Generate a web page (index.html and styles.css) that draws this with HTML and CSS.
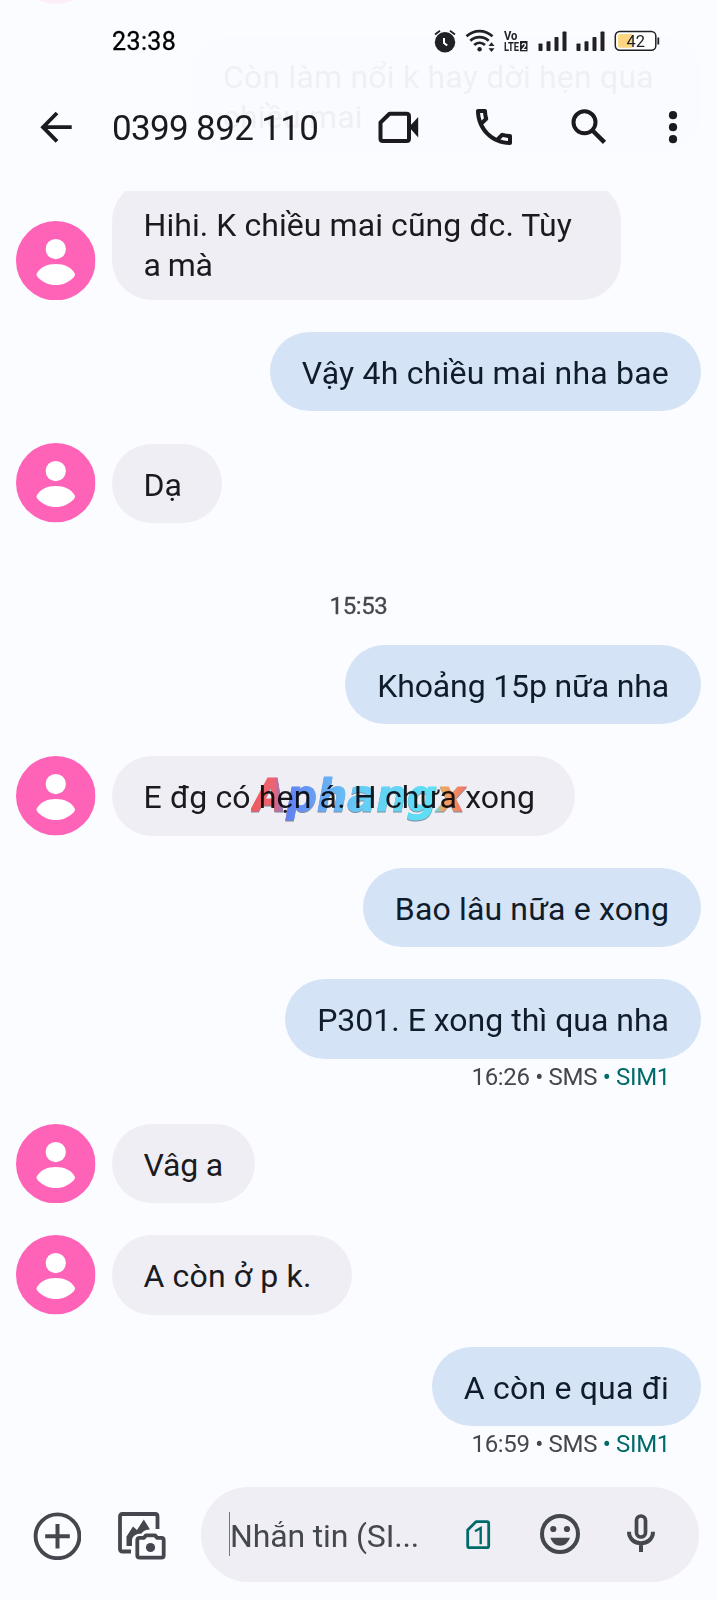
FILE: index.html
```html
<!DOCTYPE html>
<html lang="vi">
<head>
<meta charset="utf-8">
<title>0399 892 110</title>
<link rel="stylesheet" href="styles.css">
</head>
<body>
<svg class="defs" width="0" height="0" aria-hidden="true">
  <symbol id="avatar" viewBox="0 0 80 80">
    <circle cx="40" cy="40" r="40" fill="#ff63b8"/>
    <circle cx="40" cy="28.200" r="10.200" fill="#fff"/>
    <path d="M20.800 53.200C24 46.500 31.500 43.300 40 43.300S56 46.500 59.200 53.200C59.800 54.500 59 55.500 58 56.600C53.500 61.500 47 64.500 40 64.500S26.500 61.500 22 56.600C21 55.500 20.200 54.500 20.800 53.200Z" fill="#fff"/>
  </symbol>
  <symbol id="signal" viewBox="0 0 30 30">
    <g fill="#202124"><rect x="0.500" y="16.500" width="4" height="7.500" rx=".8"/><rect x="8.500" y="14.300" width="4" height="9.700" rx=".8"/><rect x="16.500" y="10" width="4" height="14" rx=".8"/><rect x="24.500" y="4.500" width="4" height="19.500" rx=".8"/></g>
  </symbol>
</svg>
<div class="phone">
  <header class="header">
    <div class="ghost">
      <div class="ghost-avatar"></div>
      <div class="ghost-bubble">Còn làm nổi k hay dời hẹn qua<br>chiều mai</div>
    </div>
    <div class="status">
      <span class="clock">23:38</span>
      <svg class="alarm" width="22" height="30" viewBox="0 0 22 30"><circle cx="11" cy="15.300" r="10.200" fill="#202124"/><path d="M1 7.500L6 3.800M21 7.500L16 3.800" stroke="#202124" stroke-width="1.800"/><path d="M10 11V16L13.200 18.500" fill="none" stroke="#fff" stroke-width="2"/></svg>
      <svg class="wifi" width="30" height="30" viewBox="0 0 30 30"><g fill="none" stroke="#202124" stroke-width="2.700"><path d="M1.500 9.300C9 2.300 20 2.300 27.500 9.300"/><path d="M5.300 13.800C10.500 9 18.500 9 23.700 13.800"/><path d="M9.200 18C12.300 15 16.800 15 20 18"/></g><circle cx="14.600" cy="22.300" r="2.200" fill="#202124"/><path d="M23.500 19L26.500 15.200L29.500 19ZM23.500 21.300L26.500 25L29.500 21.300Z" fill="#202124"/></svg>
      <svg class="volte" width="26" height="30" viewBox="0 0 26 30"><g fill="#202124" font-family="Roboto, sans-serif" font-weight="700"><text x="1" y="13" font-size="12.500" textLength="13.500" lengthAdjust="spacingAndGlyphs">Vo</text><text x="1" y="24" font-size="13.500" textLength="15" lengthAdjust="spacingAndGlyphs">LTE</text><rect x="17" y="14" width="7.500" height="10.300"/><text x="18.200" y="22.600" font-size="9.500" fill="#fff">2</text></g></svg>
      <svg class="bars" width="30" height="30"><use href="#signal"/></svg>
      <svg class="bars" width="30" height="30"><use href="#signal"/></svg>
      <svg class="battery" width="46" height="30" viewBox="0 0 46 30"><rect x="1.300" y="4.500" width="40.500" height="18.800" rx="4.500" fill="#fff" stroke="#202124" stroke-width="1.500"/><path d="M6 7H18.500V20.800H6Q4 20.800 4 18.800V9Q4 7 6 7Z" fill="#fdd681"/><path d="M44.300 10.500V17.500" stroke="#202124" stroke-width="1.800"/><text x="12.500" y="19.800" font-family="Roboto, sans-serif" font-size="16.500" fill="#202124">42</text></svg>
    </div>
    <div class="appbar">
      <svg class="icon back" width="48" height="48" viewBox="0 0 48 48"><path d="M25 10L11 24.200L25 38.400M11 24.200H39.700" fill="none" stroke="#1b1b1f" stroke-width="3.800"/></svg>
      <h1 class="title">0399 892 110</h1>
      <svg class="icon" width="48" height="48" viewBox="0 0 48 48"><path d="M15.500 10.700L6.500 19.500V35.500Q6.500 38 9 38H32.500Q35 38 35 35.500V13.200Q35 10.700 32.500 10.700Z" fill="none" stroke="#1b1b1f" stroke-width="4" stroke-linejoin="round"/><path d="M35 24L44.200 14V34.500Z" fill="#1b1b1f"/></svg>
      <svg class="icon call" width="48" height="48" viewBox="0 0 24 24"><path fill="#1b1b1f" d="M6.540 5c.06.890.210 1.760.450 2.590l-1.200 1.200c-.410-1.200-.670-2.470-.760-3.790h1.510m9.860 12.020c.850.240 1.720.390 2.600.450v1.490c-1.320-.090-2.590-.350-3.800-.750l1.200-1.190M7.500 3H4c-.550 0-1 .450-1 1 0 9.390 7.610 17 17 17 .550 0 1-.450 1-1v-3.490c0-.550-.450-1-1-1-1.240 0-2.450-.200-3.570-.570-.100-.040-.210-.050-.310-.050-.260 0-.510.100-.710.290l-2.200 2.200c-2.830-1.450-5.150-3.760-6.590-6.590l2.200-2.200c.280-.280.360-.670.250-1.020C8.700 6.450 8.500 5.250 8.500 4c0-.550-.450-1-1-1z"/></svg>
      <svg class="icon search" width="48" height="48" viewBox="0 0 48 48"><circle cx="18.500" cy="19.300" r="11" fill="none" stroke="#1b1b1f" stroke-width="4"/><path d="M27 28L38.500 39.300" stroke="#1b1b1f" stroke-width="4.500"/></svg>
      <svg class="icon more" width="48" height="48" viewBox="0 0 48 48"><g fill="#1b1b1f"><circle cx="24" cy="12.200" r="4.100"/><circle cx="24" cy="24.200" r="4.100"/><circle cx="24" cy="36.200" r="4.100"/></g></svg>
    </div>
  </header>

  <main class="thread">
    <div class="row in"><svg class="avatar"><use href="#avatar"/></svg><p class="bubble tall">Hihi. K chiều mai cũng đc. Tùy<br><span class="snug">a mà</span></p></div>
    <div class="row out"><p class="bubble loose">Vậy 4h chiều mai nha bae</p></div>
    <div class="row in"><svg class="avatar"><use href="#avatar"/></svg><p class="bubble">Dạ&nbsp;</p></div>
    <time class="time">15:53</time>
    <div class="row out"><p class="bubble snug-s">Khoảng 15p nữa nha</p></div>
    <div class="row in"><svg class="avatar"><use href="#avatar"/></svg><p class="bubble soft">E đg có hẹn á. H chưa xong&nbsp;</p>
      <svg class="mark" width="220" height="54" viewBox="0 0 220 54">
        <defs><linearGradient id="hue" gradientUnits="userSpaceOnUse" x1="0" y1="0" x2="220" y2="0"><stop offset="0" stop-color="#ff6264"/><stop offset=".1" stop-color="#ff6a74"/><stop offset=".17" stop-color="#668cff"/><stop offset=".32" stop-color="#70b4ff"/><stop offset=".5" stop-color="#6cdcff"/><stop offset=".84" stop-color="#64f0ff"/><stop offset=".87" stop-color="#ffb463"/><stop offset="1" stop-color="#ff7070"/></linearGradient></defs>
        <text x="2" y="38" textLength="212" lengthAdjust="spacingAndGlyphs" fill="url(#hue)" stroke="url(#hue)">Aphangx</text>
      </svg>
    </div>
    <div class="row out"><p class="bubble soft">Bao lâu nữa e xong</p></div>
    <div class="row out"><p class="bubble">P301. E xong thì qua nha</p><div class="meta">16:26 • SMS <span class="sim">• SIM1</span></div></div>
    <div class="row in"><svg class="avatar"><use href="#avatar"/></svg><p class="bubble snug-s">Vâg a</p></div>
    <div class="row in"><svg class="avatar"><use href="#avatar"/></svg><p class="bubble soft">A còn ở p k.&nbsp;</p></div>
    <div class="row out"><p class="bubble loose">A còn e qua đi</p><div class="meta">16:59 • SMS <span class="sim">• SIM1</span></div></div>
  </main>

  <footer class="composer">
    <svg width="48" height="48" viewBox="0 0 48 48"><circle cx="24.500" cy="24.300" r="21.900" fill="none" stroke="#44474e" stroke-width="3.900"/><path d="M24.500 12V36.600M12.200 24.300H36.800" stroke="#44474e" stroke-width="4"/></svg>
    <svg class="gallery" width="48" height="48" viewBox="0 0 48 48"><g fill="none" stroke="#44474e" stroke-width="3.800" stroke-linejoin="round"><path d="M13 39.500H4.500Q2 39.500 2 37V4.500Q2 2 4.500 2H37Q39.500 2 39.500 4.500V17"/><path d="M21.800 25.800H26L28 23.300H37L39 25.800H43.500Q45.700 25.800 45.700 28V43.500Q45.700 45.700 43.500 45.700H21.800Q19.300 45.700 19.300 43.500V28Q19.300 25.800 21.800 25.800Z"/></g><path d="M8.500 34V24.500L15 14.500L19 18L25.800 7.500L32 17.500Q26 17.500 23.500 21.500Q14.500 22 14 28L14 34Z" fill="#44474e"/><circle cx="32.500" cy="35.500" r="4.600" fill="#44474e"/></svg>
    <div class="field">
      <span class="caret"></span>
      <span class="hint">Nhắn tin (SI...</span>
      <svg class="simcard" width="26" height="32" viewBox="0 0 26 32"><path d="M11 2.700L2.700 11V27Q2.700 28.700 4.400 28.700H22Q23.700 28.700 23.700 27V4.400Q23.700 2.700 22 2.700Z" fill="none" stroke="#006a6a" stroke-width="2.800" stroke-linejoin="round"/><path d="M10 12.300L15.700 9V25.300" fill="none" stroke="#006a6a" stroke-width="2.400"/></svg>
      <svg class="emoji" width="42" height="42" viewBox="0 0 42 42"><circle cx="21" cy="21" r="18" fill="none" stroke="#44474e" stroke-width="4"/><g fill="#44474e"><circle cx="14.300" cy="16" r="3.100"/><circle cx="28" cy="16" r="3.100"/><path d="M11.300 24.700H31Q28 32.700 21.100 32.700T11.300 24.700Z"/></g></svg>
      <svg class="mic" width="30" height="40" viewBox="0 0 30 40"><rect x="10.500" y="3" width="9" height="21" rx="4.500" fill="none" stroke="#44474e" stroke-width="3.700"/><path d="M3 18.800C3 34 27 34 27 18.800M15 29.500V39" fill="none" stroke="#44474e" stroke-width="4"/></svg>
    </div>
  </footer>
</div>
</body>
</html>
```
FILE: styles.css
```css
* { box-sizing: border-box; }
body { margin: 0; background: #fbfcff; font-family: Roboto, "Noto Sans", sans-serif; color: #1b1b1f; }
.defs { position: absolute; }
.phone { width: 717px; height: 1600px; display: flex; flex-direction: column; overflow: hidden; }

.header { position: relative; height: 191px; flex: none; overflow: hidden; }
.ghost { position: absolute; inset: 0; pointer-events: none; }
.ghost-avatar { position: absolute; left: 16px; top: -76px; width: 80px; height: 80px; border-radius: 50%; background: #feeef7; }
.ghost-bubble { position: absolute; left: 191px; top: 36px; width: 510px; height: 116px; padding: 21px 0 0 32px; border-radius: 40px; background: #fafbfe; font-size: 32px; line-height: 40px; letter-spacing: .2px; color: #eff0f3; white-space: nowrap; }

.status { position: relative; height: 57px; padding: 27px 0 0 112px; display: flex; align-items: flex-start; }
.clock { width: 322px; font-size: 25px; line-height: 30px; letter-spacing: .4px; color: #000; -webkit-text-stroke: .3px #000; }
.wifi { margin-left: 9px; }
.volte { margin-left: 8px; }
.bars { margin-left: 8px; }
.volte + .bars { margin-left: 9px; }
.battery { margin-left: 8px; }

.appbar { position: relative; height: 140px; padding: 46px 0 0 32px; display: flex; align-items: flex-start; }
.title { margin: 1px 0 0 32px; width: 262px; font-size: 35px; line-height: 50px; font-weight: 400; letter-spacing: -.65px; white-space: nowrap; }
.call, .search { margin-left: 48px; }
.more { margin-left: 35px; }

.thread { flex: none; height: 1269px; padding: 0 16px; display: flex; flex-direction: column; gap: 32px; overflow: hidden; }
.row { position: relative; display: flex; flex: none; }
.in { align-items: flex-end; gap: 16px; }
.out { flex-direction: column; align-items: flex-end; }
.avatar { width: 79.500px; height: 79.500px; flex: none; }
.bubble { margin: 0; height: 79.400px; padding: 22px 32px 0; border-radius: 40px; background: #efeef4; font-size: 32px; line-height: 38px; white-space: nowrap; }
.out .bubble { background: #d5e3f6; color: #101c2b; }
.bubble.tall { margin-top: -10px; height: 119px; width: 509px; padding-top: 24px; line-height: 40px; letter-spacing: .07px; }
.loose { letter-spacing: .2px; }
.soft { letter-spacing: .15px; }
.snug { letter-spacing: -.5px; }
.snug-s { letter-spacing: -.15px; }
.time { height: 62px; margin-bottom: -4px; padding-top: 39px; text-align: center; font-size: 24px; line-height: 24px; letter-spacing: -.4px; color: #44474e; -webkit-text-stroke: .3px #44474e; }
.meta { height: 33px; padding: 5px 31px 0 0; font-size: 24px; line-height: 27px; letter-spacing: -.33px; color: #46474b; white-space: nowrap; }
.sim { color: #006a6a; }
.mark { position: absolute; left: 235px; top: 17px; mix-blend-mode: multiply; filter: drop-shadow(0 1px .5px #8796a5); }
.mark text { font: italic 700 44px "DejaVu Sans", sans-serif; stroke-width: 1px; }

.composer { flex: none; height: 140px; padding: 27px 18px 0 33px; display: flex; align-items: flex-start; }
.composer > svg { margin-top: 25px; flex: none; }
.composer > .gallery { margin-left: 37px; }
.field { margin-left: 35px; width: 498px; height: 95px; padding-left: 28px; border-radius: 48px; background: #efeef4; display: flex; align-items: center; }
.caret { width: 1px; height: 44px; margin-top: -2px; background: #77787d; }
.hint { width: 235px; margin: 3px 0 0 0; font-size: 32px; line-height: 40px; letter-spacing: -.15px; color: #44474e; white-space: nowrap; }
.emoji { margin-left: 48px; margin-top: -1px; }
.mic { margin-left: 45px; margin-top: -3px; }
```
